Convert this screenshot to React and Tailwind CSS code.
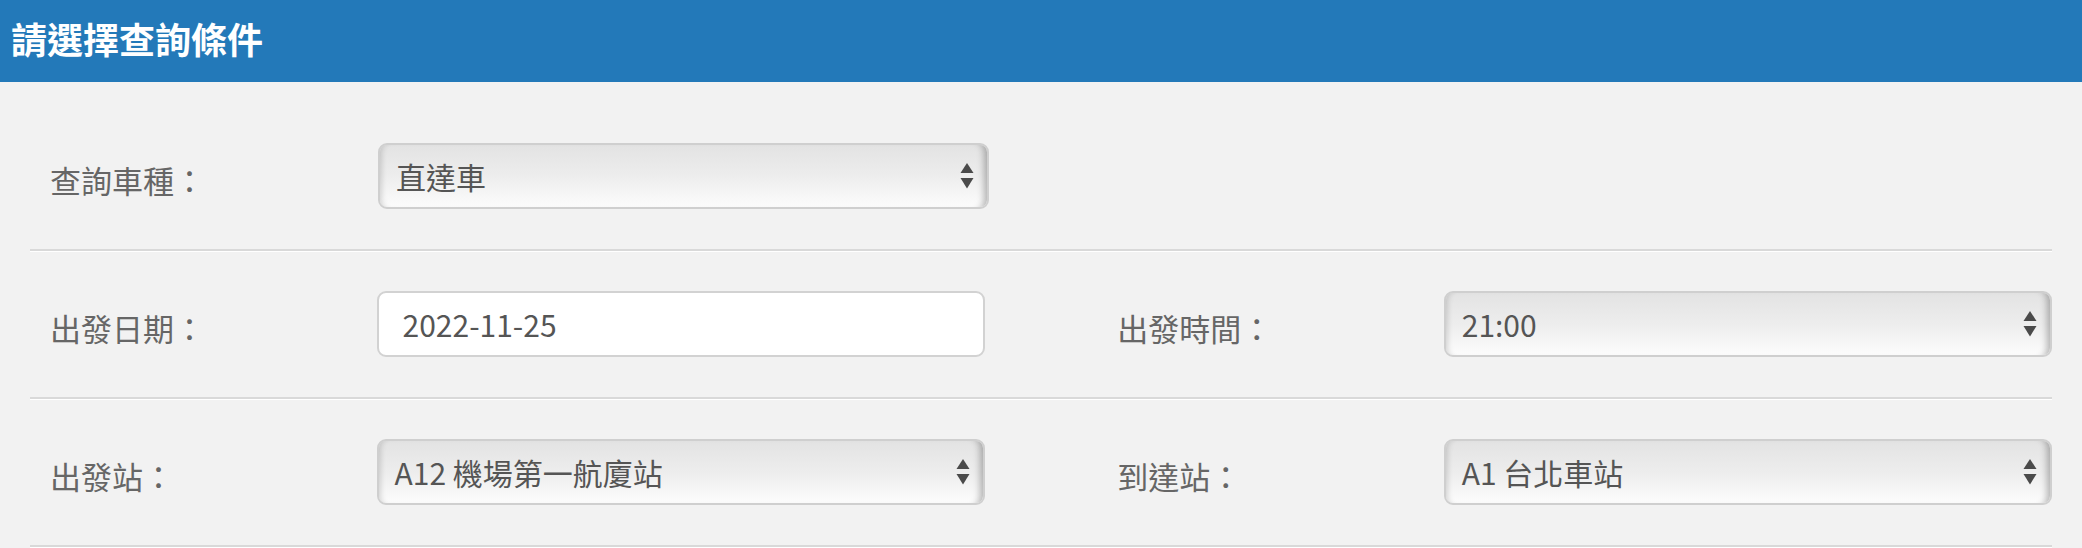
import React from 'react'

const FONT = { fontFamily: '"Noto Sans CJK TC", "Noto Sans", sans-serif' }

function Arrows() {
  return (
    <svg width="14" height="28" viewBox="0 0 14 28" className="shrink-0">
      <path d="M7 1 L13.5 11 L0.5 11 Z" fill="#4a4a4a" />
      <path d="M0.5 16 L13.5 16 L7 26.5 Z" fill="#4a4a4a" />
    </svg>
  )
}

function SelectBox({ value }) {
  return (
    <div className="w-full h-[66px] flex items-center justify-between pl-[16px] pr-[13px] rounded-[9px] border-2 border-[#cfcfcf] bg-gradient-to-b from-[#e3e3e3] via-[#ededed] to-[#fcfcfc] shadow-[inset_7px_0_6px_-6px_rgba(0,0,0,0.18),inset_-9px_0_7px_-6px_rgba(0,0,0,0.28)]">
      <span className="text-[30px] leading-none text-[#555]">{value}</span>
      <Arrows />
    </div>
  )
}

function InputBox({ value }) {
  return (
    <div className="w-full h-[66px] flex items-center pl-[24px] rounded-[9px] border-2 border-[#d2d2d2] bg-white">
      <span className="text-[30px] leading-none text-[#555]">{value}</span>
    </div>
  )
}

function Label({ children }) {
  return <div className="text-[31px] leading-none text-[#666] pt-[6px]">{children}</div>
}

function Row({ left, right }) {
  return (
    <div className="flex items-center py-[40px] border-b-2 border-[#d9d9d9] shadow-[0_1px_0_#ffffff]">
      <div className="w-[348px] pl-[20px]">
        <Label>{left.label}</Label>
      </div>
      <div className="w-[611px]">{left.field}</div>
      {right && (
        <>
          <div className="w-[133px]" />
          <div className="w-[328px]">
            <Label>{right.label}</Label>
          </div>
          <div className="w-[611px]">{right.field}</div>
        </>
      )}
    </div>
  )
}

export default function App() {
  return (
    <div className="min-h-[548px] bg-[#f2f2f2]" style={FONT}>
      {/* header */}
      <div className="h-[82px] bg-[#2379b9] flex items-center pl-[11px]">
        <h1 className="text-[36px] font-bold leading-none text-white pb-[6px]">請選擇查詢條件</h1>
      </div>

      <div className="px-[30px] pt-[21px]">
        <Row left={{ label: '查詢車種：', field: <SelectBox value="直達車" /> }} />
        <Row
          left={{ label: '出發日期：', field: <InputBox value="2022-11-25" /> }}
          right={{ label: '出發時間：', field: <SelectBox value="21:00" /> }}
        />
        <Row
          left={{ label: '出發站：', field: <SelectBox value="A12 機場第一航廈站" /> }}
          right={{ label: '到達站：', field: <SelectBox value="A1 台北車站" /> }}
        />
      </div>
    </div>
  )
}
